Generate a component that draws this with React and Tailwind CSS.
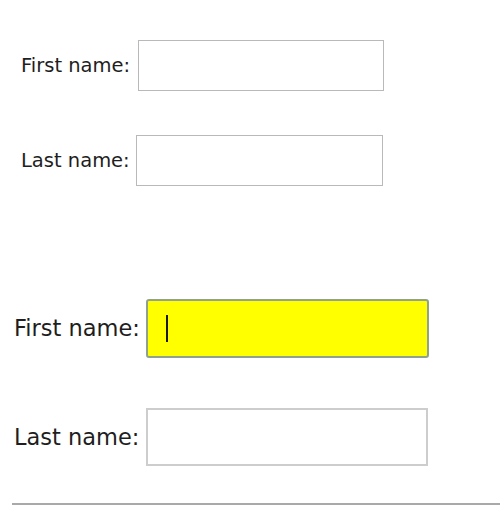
export default function App() {
    return (
        <div className="w-[500px] h-[505px] bg-white overflow-hidden text-[#1e1e1e]" style={{ fontFamily: '"DejaVu Sans", Verdana, sans-serif' }}>
            <div className="pt-[40px]">
                <div className="flex items-center gap-[8px] pl-[21px]">
                    <label className="text-[19.5px] leading-none">First name:</label>
                    <input type="text" className="w-[246px] h-[51px] border border-[#b9b9b9] bg-white outline-none" />
                </div>
                <div className="flex items-center gap-[6px] pl-[21px] mt-[44px]">
                    <label className="text-[19.5px] leading-none">Last name:</label>
                    <input type="text" className="w-[247px] h-[51px] border border-[#b9b9b9] bg-white outline-none" />
                </div>
            </div>

            <div className="mt-[113px]">
                <div className="flex items-center gap-[6px] pl-[14px]">
                    <label className="text-[22.5px] leading-none">First name:</label>
                    <div className="w-[283px] h-[59px] border-2 border-[#8ea28e] rounded-[3px] bg-[#ffff00] flex items-center pl-[18px]">
                        <span className="block w-[2px] h-[27px] bg-[#1a1a1a]"></span>
                    </div>
                </div>
                <div className="flex items-center gap-[7px] pl-[14px] mt-[50px]">
                    <label className="text-[22.5px] leading-none">Last name:</label>
                    <input type="text" className="w-[282px] h-[58px] border-2 border-[#cdcdcd] bg-white outline-none" />
                </div>
            </div>

            <div className="ml-[12px] mt-[37px] h-[2px] bg-[#a9a9a9]"></div>
        </div>
    );
}
